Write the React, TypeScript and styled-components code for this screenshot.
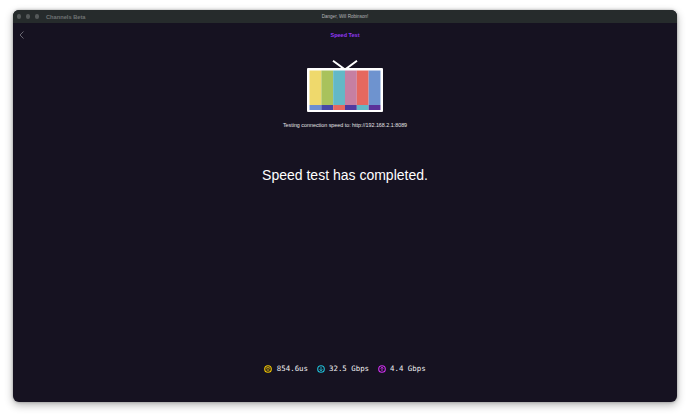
import React from "react";
import styled, { createGlobalStyle } from "styled-components";

const GlobalStyle = createGlobalStyle`
  html, body {
    margin: 0;
    background: #ffffff;
    font-family: "Liberation Sans", Arial, sans-serif;
  }
`;

const bars = [
  { top: "#efd96c", bottom: "#6e8fd0" },
  { top: "#a9c25c", bottom: "#4748a6" },
  { top: "#63b8c6", bottom: "#e5685f" },
  { top: "#c67fa2", bottom: "#4f3a9f" },
  { top: "#e5685f", bottom: "#63b8c6" },
  { top: "#6e93cf", bottom: "#5b3199" },
];

const TvLogo = () => (
  <svg width="76" height="52" viewBox="0 0 76 52">
    <path d="M26 0.8 L38 9.5 L50 0.8" fill="none" stroke="#fff" strokeWidth="2" />
    <rect x="0" y="8" width="76" height="44" rx="1" fill="#fff" />
    {bars.map((bar, i) => (
      <g key={bar.top}>
        <rect x={2.5 + i * 11.83} y="10.5" width="11.83" height="34.5" fill={bar.top} />
        <rect x={2.5 + i * 11.83} y="45" width="11.83" height="5" fill={bar.bottom} />
      </g>
    ))}
  </svg>
);

const PingIcon = () => (
  <svg width="8" height="8" viewBox="0 0 8 8" fill="none" stroke="#f5c800">
    <circle cx="4" cy="4" r="3.3" strokeWidth="1.1" />
    <path d="M1.8 3.6 C3 2.4 5 2.4 6.2 3.6 M2.6 5 H5.4" strokeWidth="1" />
  </svg>
);

const ArrowIcon = ({ color, up }: { color: string; up?: boolean }) => (
  <svg width="8" height="8" viewBox="0 0 8 8" fill="none" stroke={color}>
    <circle cx="4" cy="4" r="3.3" strokeWidth="1.1" />
    <path
      d={up ? "M4 6 V2.2 M2.6 3.6 L4 2.2 L5.4 3.6" : "M4 2 V5.8 M2.6 4.4 L4 5.8 L5.4 4.4"}
      strokeWidth="0.9"
    />
  </svg>
);

const App = () => {
  return (
    <Page>
      <GlobalStyle />
      <Window>
        <TitleBar>
          <Lights>
            <Light />
            <Light />
            <Light />
            <AppName>Channels Beta</AppName>
          </Lights>
          <WindowTitle>Danger, Will Robinson!</WindowTitle>
        </TitleBar>
        <Header>
          <BackButton>
            <svg width="6" height="8" viewBox="0 0 6 8" fill="none" stroke="#7d7c86" strokeWidth="0.8">
              <path d="M4.5 0.5 L1 4 L4.5 7.5" />
            </svg>
          </BackButton>
          <HeaderTitle>Speed Test</HeaderTitle>
        </Header>
        <Content>
          <TvLogo />
          <Testing>Testing connection speed to: http://192.168.2.1:8089</Testing>
          <Result>Speed test has completed.</Result>
        </Content>
        <Stats>
          <Stat>
            <PingIcon />
            854.6us
          </Stat>
          <Stat>
            <ArrowIcon color="#1fc0d8" />
            32.5 Gbps
          </Stat>
          <Stat>
            <ArrowIcon color="#d030f0" up />
            4.4 Gbps
          </Stat>
        </Stats>
      </Window>
    </Page>
  );
};

const Page = styled.div`
  width: 690px;
  height: 418px;
  box-sizing: border-box;
  padding: 10px 13px 16px;
  overflow: hidden;
`;

const Window = styled.div`
  height: 392px;
  display: flex;
  flex-direction: column;
  background: #161221;
  border-radius: 6px;
  overflow: hidden;
  box-shadow: 0 3px 9px rgba(0, 0, 0, 0.3), 0 0 3px rgba(0, 0, 0, 0.3);
`;

const TitleBar = styled.div`
  position: relative;
  height: 13px;
  flex: none;
  display: flex;
  align-items: center;
  justify-content: center;
  background: #262b2c;
`;

const Lights = styled.div`
  position: absolute;
  left: 3.5px;
  top: 0;
  height: 13px;
  display: flex;
  align-items: center;
  gap: 4.5px;
`;

const Light = styled.span`
  width: 4.5px;
  height: 4.5px;
  border-radius: 50%;
  background: #55595a;
`;

const AppName = styled.span`
  margin-left: 2.5px;
  font-size: 5.7px;
  font-weight: 700;
  color: #6f7374;
`;

const WindowTitle = styled.span`
  font-size: 4.6px;
  color: #b4b5b8;
`;

const Header = styled.div`
  position: relative;
  flex: none;
  height: 24px;
  display: flex;
  align-items: center;
  justify-content: center;
`;

const BackButton = styled.span`
  position: absolute;
  left: 6px;
  top: 8px;
  display: flex;
`;

const HeaderTitle = styled.span`
  font-size: 5.5px;
  font-weight: 700;
  color: #9238f5;
`;

const Content = styled.div`
  flex: 1;
  display: flex;
  flex-direction: column;
  align-items: center;
  padding-top: 13px;
`;

const Testing = styled.div`
  margin-top: 9px;
  font-size: 5.35px;
  line-height: 8px;
  color: #e4e4e6;
`;

const Result = styled.div`
  margin-top: 36px;
  font-size: 14px;
  line-height: 20px;
  color: #ffffff;
`;

const Stats = styled.div`
  flex: none;
  height: 40px;
  padding-bottom: 27px;
  box-sizing: border-box;
  display: flex;
  align-items: center;
  justify-content: center;
  gap: 8.5px;
`;

const Stat = styled.div`
  display: flex;
  align-items: center;
  gap: 4.5px;
  font-family: "DejaVu Sans Mono", "Liberation Mono", monospace;
  font-size: 7.4px;
  color: #f0f0f2;
`;

export default App;
